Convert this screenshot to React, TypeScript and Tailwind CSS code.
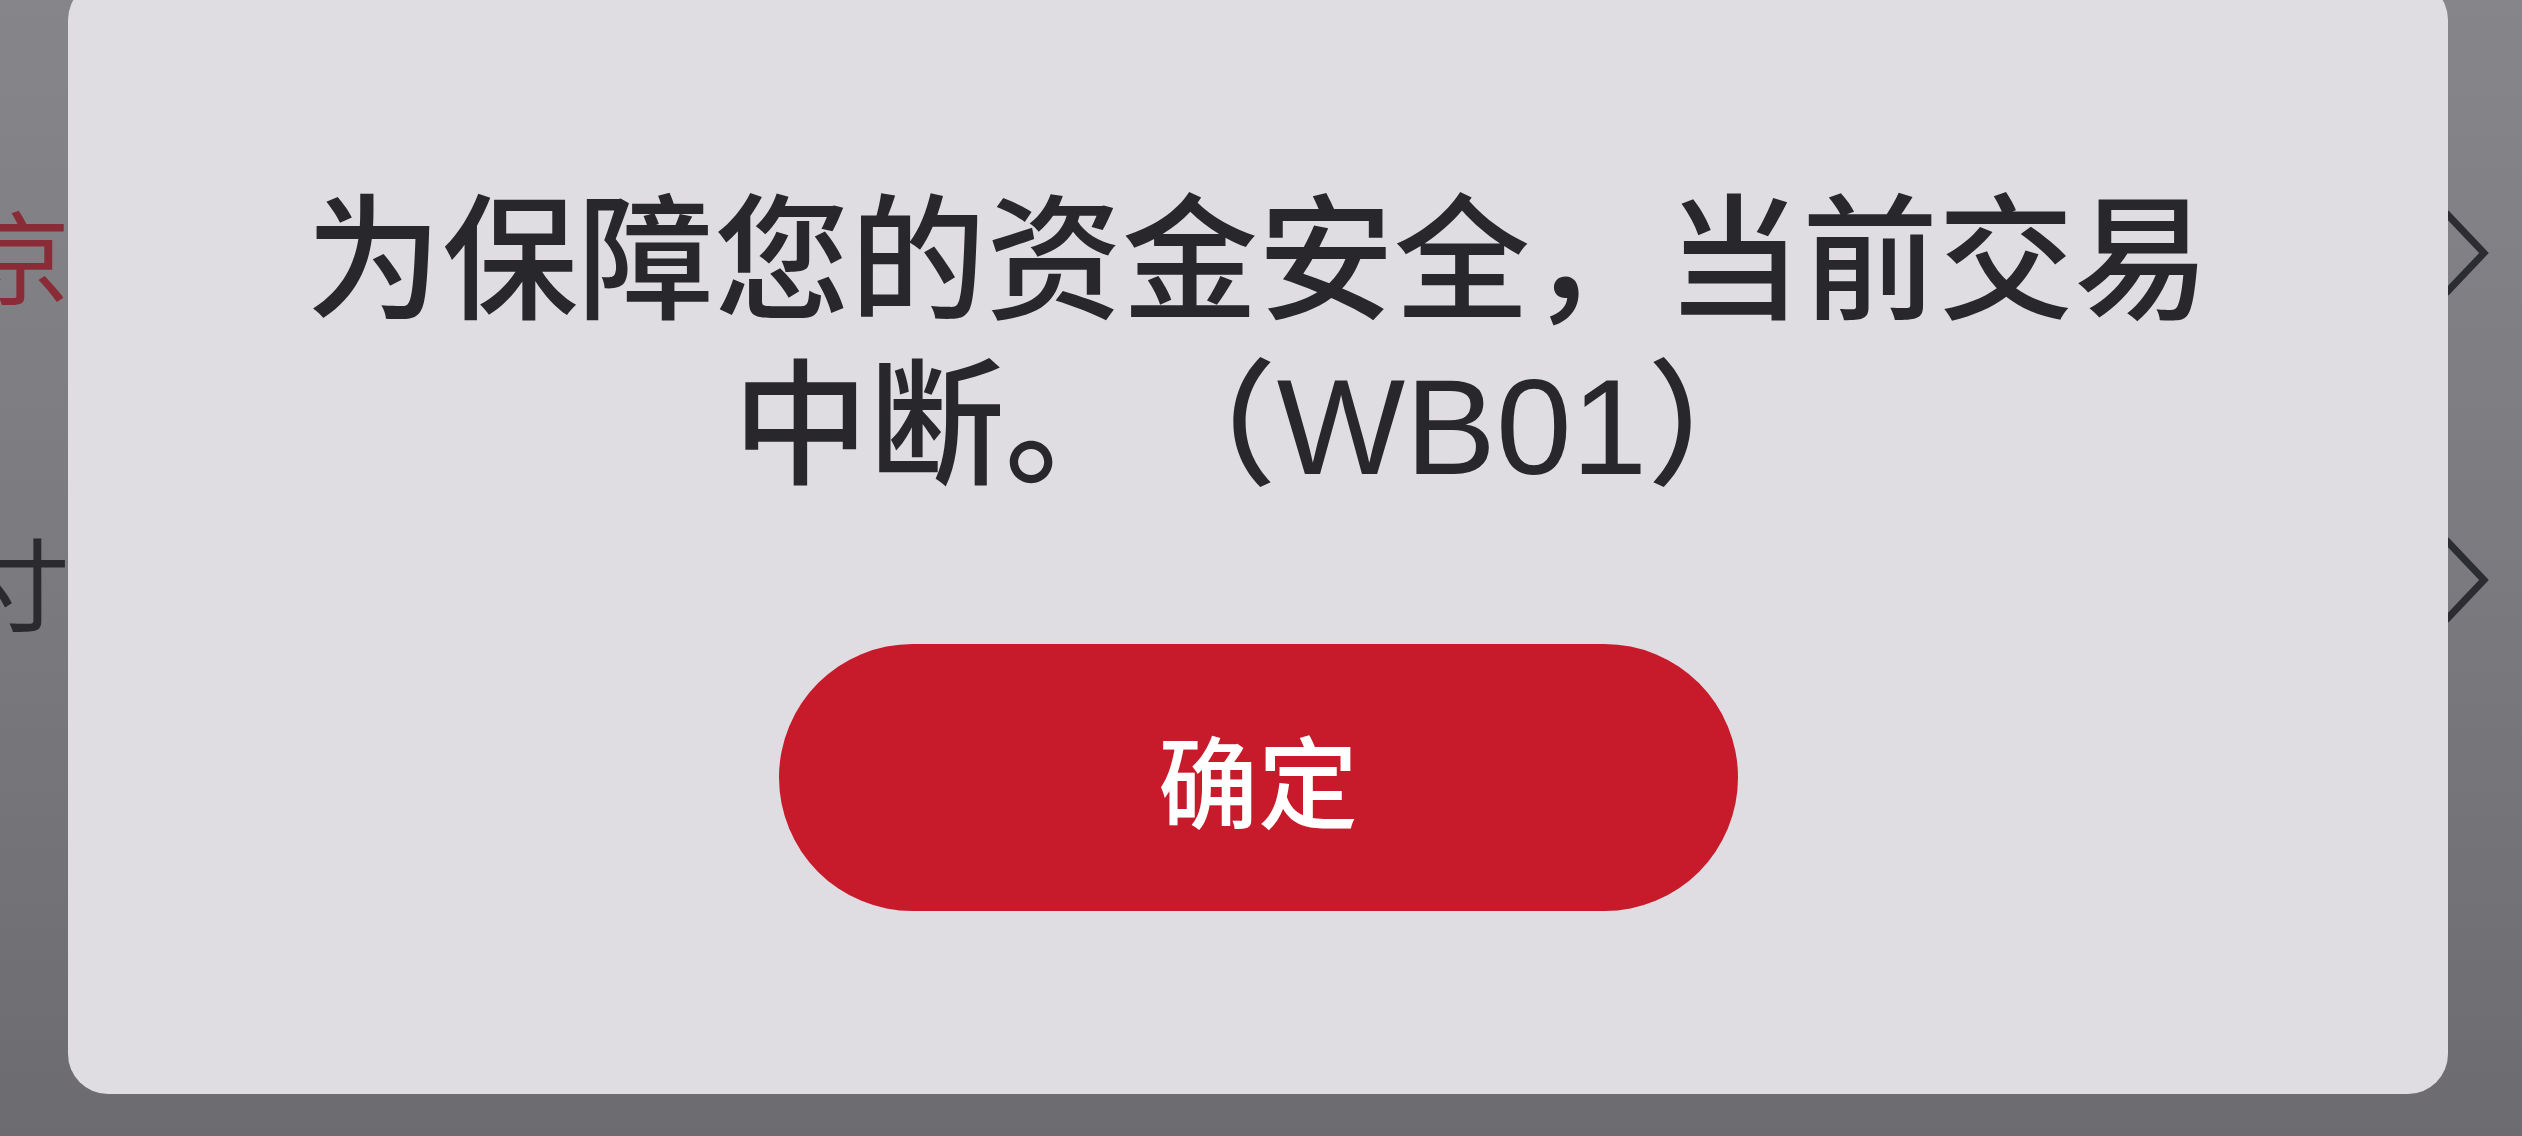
import React from 'react';

const cjk = { fontFamily: '"Noto Sans CJK SC", "Noto Sans", sans-serif' };
const dialogFont = { fontFamily: '"Liberation Sans", "Noto Sans CJK SC", sans-serif' };

const Chevron: React.FC = () => (
  <svg width="52" height="88" viewBox="0 0 52 88" fill="none" className="text-[#2c2c33]">
    <path d="M6 4 L44 44 L6 84" stroke="currentColor" strokeWidth="7" strokeLinejoin="miter" />
  </svg>
);

const App: React.FC = () => {
  const rows = [
    { label: '京', color: 'text-[#8a2c38]' },
    { label: '寸', color: 'text-[#2a2a2f]' },
  ];

  return (
    <div
      className="relative w-full h-[1136px] overflow-hidden bg-gradient-to-b from-[#86868a] via-[#7b7b7f] to-[#6b6b70]"
      style={cjk}
    >
      {/* page behind the dialog */}
      <div className="flex flex-col pt-[199px] gap-[219px]">
        {rows.map((row, i) => (
          <div key={i} className="flex items-center justify-between h-[108px]">
            <span className={`-ml-[30px] text-[100px] leading-none ${row.color}`}>{row.label}</span>
            <div className="mr-[30px]">
              <Chevron />
            </div>
          </div>
        ))}
      </div>

      {/* dialog */}
      <div className="absolute left-[68px] top-[-20px] w-[2380px] h-[1114px] rounded-[40px] bg-[#dfdde1] flex flex-col items-center pt-[200px]">
        <p
          className="text-[136px] leading-[165px] font-medium text-[#28282c] text-center w-[1910px] [text-spacing-trim:space-all]"
          style={dialogFont}
        >
          为保障您的资金安全，当前交易中断。（WB01）
        </p>
        <button className="mt-[134px] w-[959px] h-[267px] rounded-full bg-[#c71a2a] text-white text-[100px] leading-none font-medium flex items-center justify-center">
          确定
        </button>
      </div>
    </div>
  );
};

export default App;
